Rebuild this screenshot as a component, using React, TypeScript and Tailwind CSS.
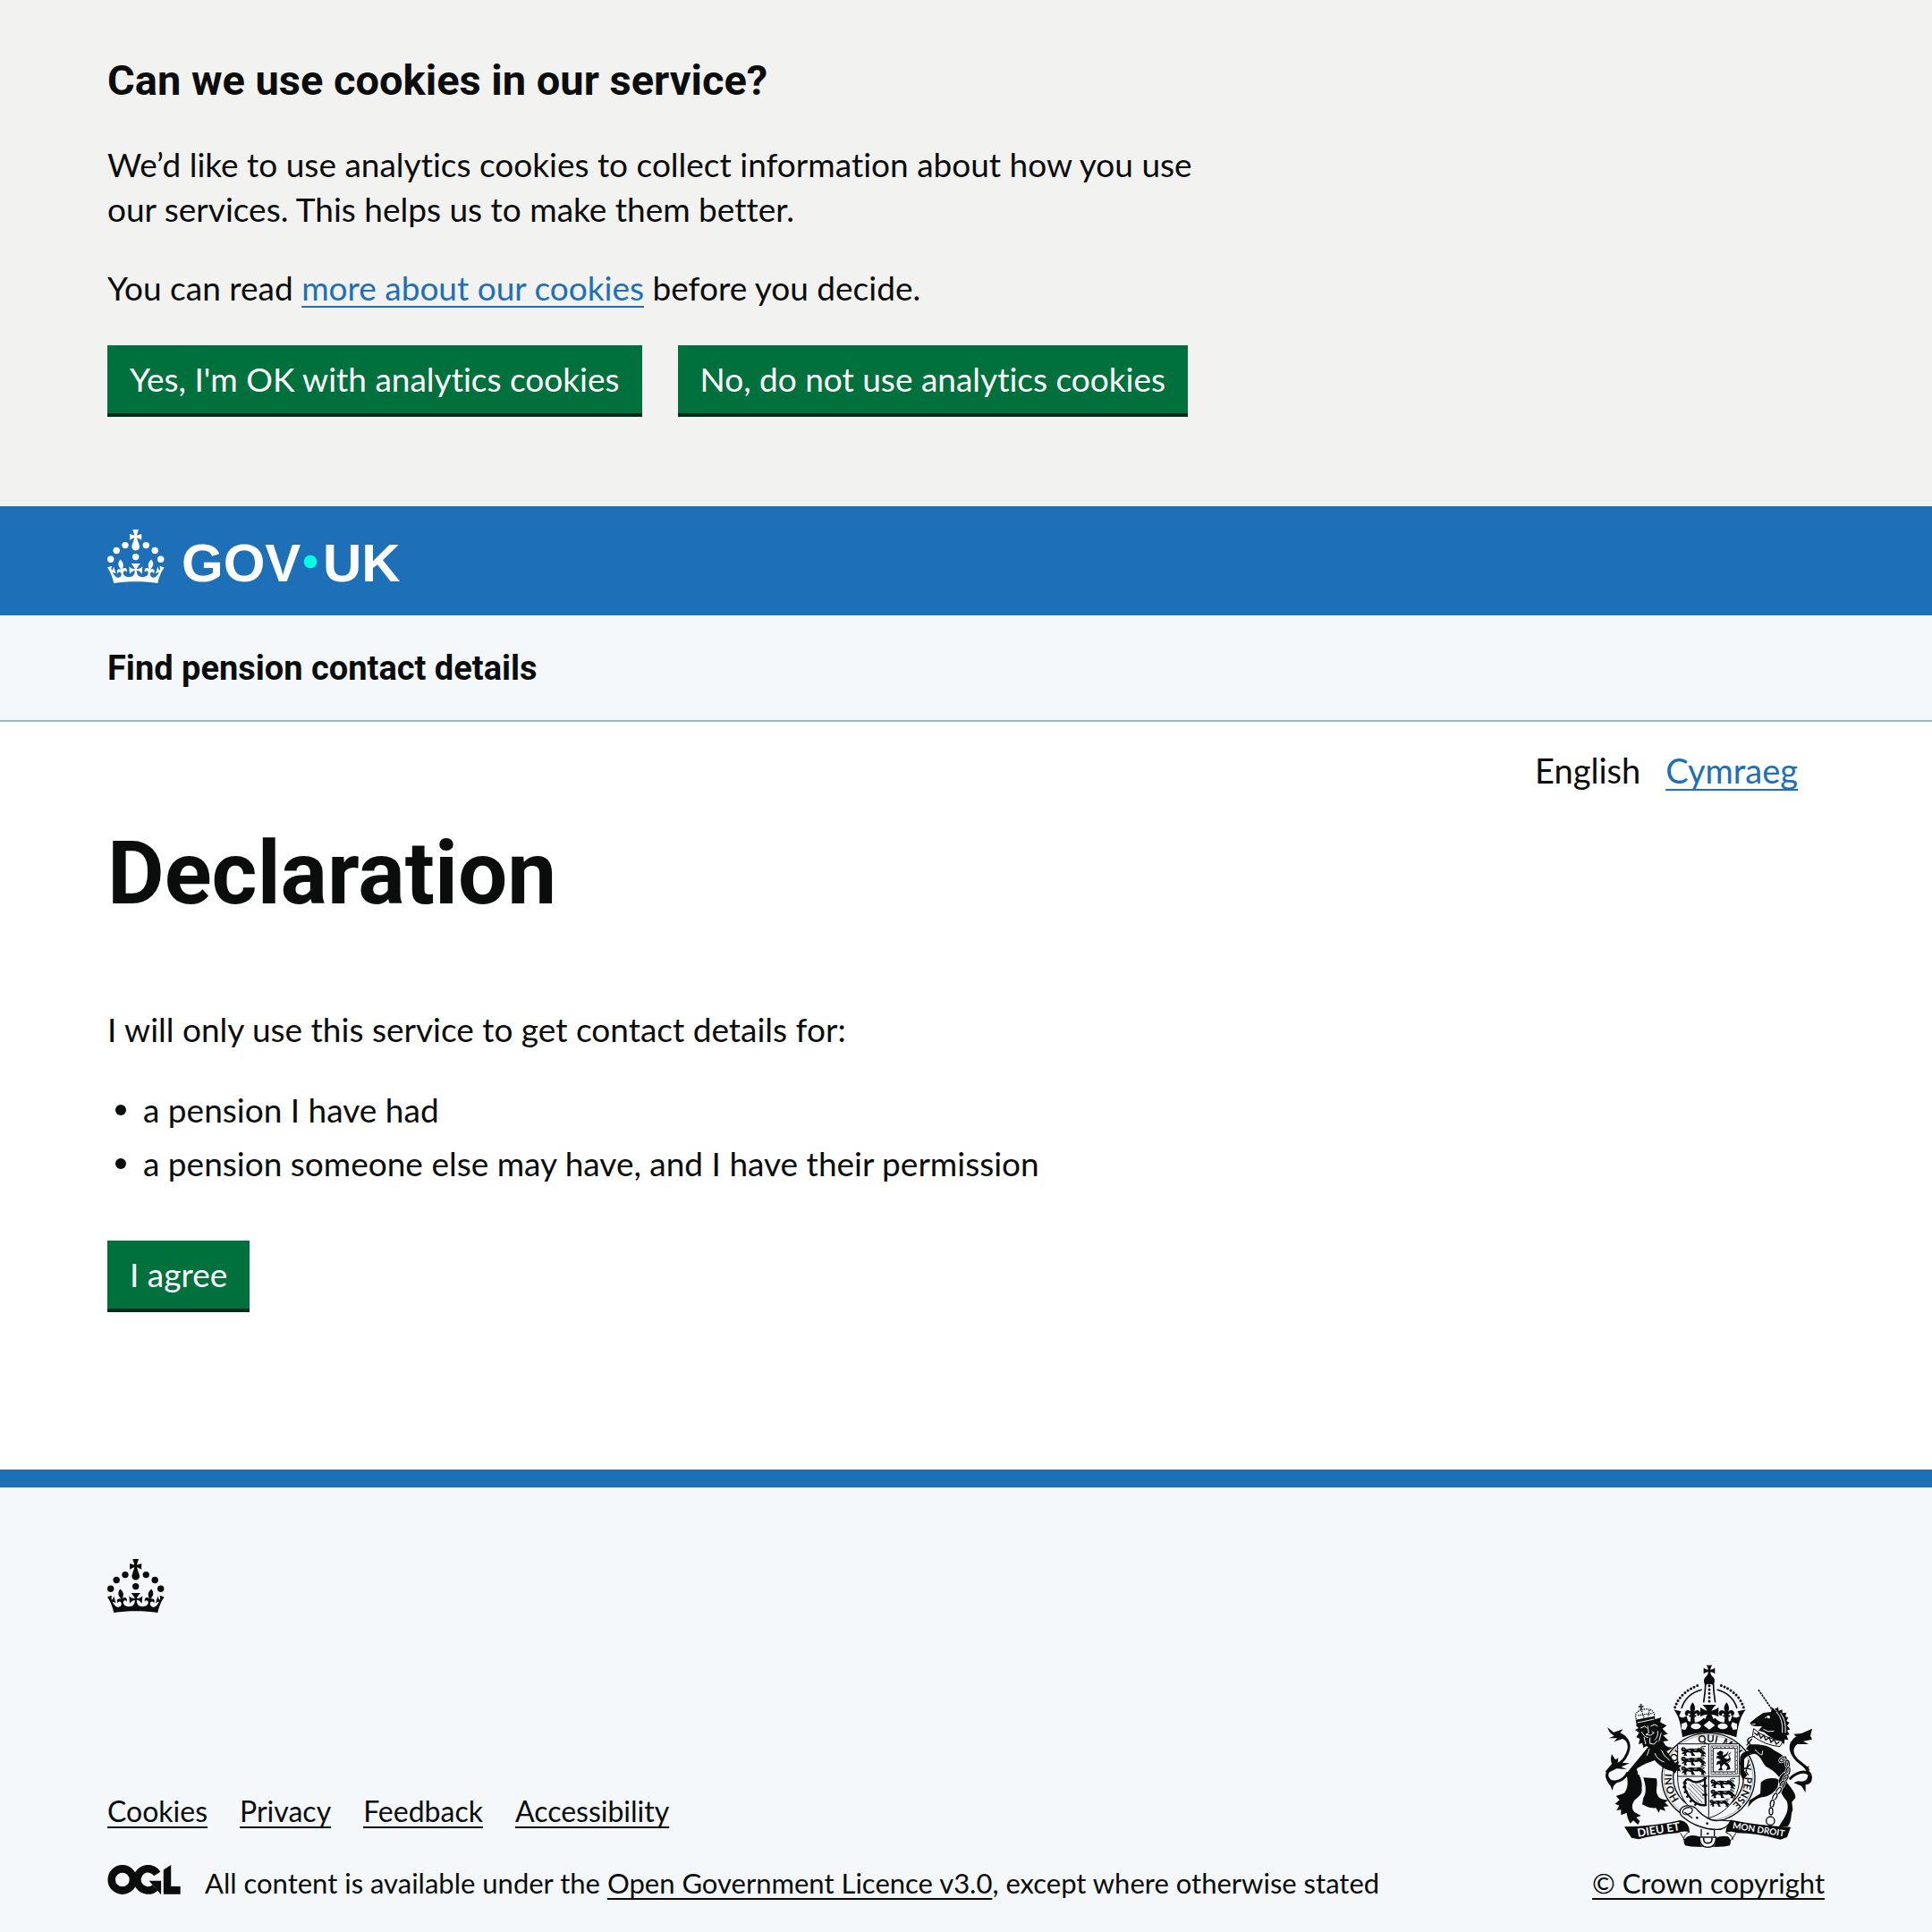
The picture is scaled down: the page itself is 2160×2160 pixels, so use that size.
import React from "react";

const INK = "#0b0c0c";
const PAPER = "#f4f8fb";

const CROWN_DOTS: [number, number][] = [
  [20, 17.6],
  [10.2, 23.5],
  [3.7, 33.2],
  [31.7, 30.6],
  [43.3, 17.6],
  [53.2, 23.5],
  [59.7, 33.2],
];

const CROWN_PATH =
  "M33.1,9.8c.2-.1.3-.3.5-.5l4.6,2.4v-6.8l-4.6,1.5c-.1-.2-.3-.3-.5-.5l1.9-5.9h-6.7l1.9,5.9c-.2.1-.3.3-.5.5l-4.6-1.5v6.8l4.6-2.4c.1.2.3.3.5.5l-2.6,8c-.9,2.8,1.2,5.7,4.1,5.7h0c3,0,5.1-2.9,4.1-5.7l-2.6-8ZM37,37.9s-3.4,3.8-4.1,6.1c2.2,0,4.2-.5,6.4-2.8l-.7,8.5c-2-2.8-4.4-4.1-5.7-3.8.1,3.1.5,6.7,5.8,7.2,3.7.3,6.7-1.5,7-3.8.4-2.6-2-4.3-3.7-1.6-1.4-4.5,2.4-6.1,4.9-3.2-1.9-4.5-1.8-7.7,2.4-10.9,3,4,2.6,7.3-1.2,11.1,2.4-1.3,6.2,0,4,4.6-1.2-2.8-3.7-2.2-4.2.2-.3,1.7.7,3.7,3,4.2,1.9.3,4.7-.9,7-5.9-1.3,0-2.4.7-3.9,1.7l2.4-8c.6,2.3,1.4,3.7,2.2,4.5.6-1.6.5-2.8,0-5.3l5,1.8c-2.6,3.6-5.2,8.7-7.3,17.5-7.4-1.1-15.7-1.7-24.5-1.7h0c-8.8,0-17.1.6-24.5,1.7-2.1-8.9-4.7-13.9-7.3-17.5l5-1.8c-.5,2.5-.6,3.7,0,5.3.8-.8,1.6-2.3,2.2-4.5l2.4,8c-1.5-1-2.6-1.7-3.9-1.7,2.3,5,5.2,6.2,7,5.9,2.3-.4,3.3-2.4,3-4.2-.5-2.4-3-3.1-4.2-.2-2.2-4.6,1.6-6,4-4.6-3.7-3.7-4.2-7.1-1.2-11.1,4.2,3.2,4.3,6.4,2.4,10.9,2.5-2.8,6.3-1.3,4.9,3.2-1.8-2.7-4.1-1-3.7,1.6.3,2.3,3.3,4.1,7,3.8,5.4-.5,5.7-4.2,5.8-7.2-1.3-.2-3.7,1-5.7,3.8l-.7-8.5c2.2,2.3,4.2,2.7,6.4,2.8-.7-2.3-4.1-6.1-4.1-6.1h10.6Z";

function CrownMark() {
  return (
    <g fill="currentColor">
      {CROWN_DOTS.map(([cx, cy]) => (
        <circle key={`${cx}-${cy}`} cx={cx} cy={cy} r="3.7" />
      ))}
      <path d={CROWN_PATH} />
    </g>
  );
}

function GovUkLogo() {
  return (
    <svg viewBox="0 0 324 60" width="324" height="60" role="img" aria-label="GOV.UK" className="block overflow-visible text-white">
      <CrownMark />
      <g fill="currentColor" fontFamily="'Liberation Sans', Arial, sans-serif" fontWeight="700" fontSize="60">
        <text x="83" y="58">GOV</text>
        <text x="241" y="58">UK</text>
      </g>
      <circle cx="227" cy="36" r="7.3" fill="#00ffe0" />
    </svg>
  );
}

function OglLogo() {
  return (
    <svg viewBox="0 0 483 196" width="82" height="33" role="img" aria-label="Open Government Licence" className="block shrink-0">
      <g fill="none" stroke={INK} strokeWidth="51">
        <circle cx="98" cy="98" r="72" />
        <path d="M329 59A72 72 0 1 0 316 151" />
      </g>
      <g fill={INK}>
        <rect x="165" y="60" width="36" height="76" />
        <path d="M275 106h80v88h-3z" />
        <path d="M371 32L421 0v143h62v51H371z" />
      </g>
    </svg>
  );
}

function PassantLion({ x, y }: { x: number; y: number }) {
  return (
    <g transform={`translate(${x} ${y})`}>
      <path
        fill={INK}
        d="M0 6L5 0L13 1L18 7L28 5C38 2 46 7 56 4C64 1 70 5 73 11L81 17L84 25L76 22L79 30L66 28L70 23L61 16C53 19 45 17 40 17L44 24L48 29H36L33 19L22 17L17 21L20 29H9L12 22L2 24L6 17L12 15L3 14Z"
      />
      <path d="M72 8C84 9 76 1 68 3C62 -1 76 -5 83 -2" fill="none" stroke={INK} strokeWidth="3" />
      <path d="M6 7h6M24 10l8 3M44 10l10-1" stroke={PAPER} strokeWidth="2" />
    </g>
  );
}

function CrossPatee({ x, y, r }: { x: number; y: number; r: number }) {
  return (
    <path
      transform={`translate(${x} ${y}) scale(${r})`}
      fill={INK}
      d="M-.5-1H.5Q.2-.6.18-.18Q.6-.2 1-.5V.5Q.6.2.18.18Q.2.6.5 1H-.5Q-.2.6-.18.18Q-.6.2-1 .5V-.5Q-.6-.2-.18-.18Q-.2-.6-.5-1Z"
    />
  );
}

function FleurDeLis({ x, y }: { x: number; y: number }) {
  return (
    <path
      transform={`translate(${x} ${y})`}
      fill={INK}
      d="M0-28C10-15 10-5 4 6C8-4 24-6 26 8C26 16 18 20 14 14C18 8 12 5 6 14L12 15V20L6 21L8 42H-8L-6 21L-12 20V15L-6 14C-12 5-18 8-14 14C-18 20-26 16-26 8C-24-6-8-4-4 6C-10-5-10-15 0-28Z"
    />
  );
}

const CHAIN: [number, number, number][] = [
  [670, 351, 60],
  [685, 366, -10],
  [687, 390, 10],
  [679, 414, 30],
  [668, 435, 25],
  [656, 456, 35],
  [643, 476, 25],
  [634, 499, 10],
  [630, 525, 0],
];

const GARTER_WORDS: [string, number][] = [
  ["HONI", 112],
  ["SOIT", 222],
  ["QUI", 346],
  ["MAL", 424],
  ["Y", 528],
  ["PENSE", 566],
];

function RoyalArms() {
  return (
    <svg viewBox="60 30 720 624" width="240" height="208" aria-hidden="true" className="block">
      {/* Imperial crown */}
      <CrossPatee x={423} y={54} r={19} />
      <path fill={INK} d="M417 70h12c14 8 14 18 8 32q-14-8-28 0c-6-14-6-24 8-32z" />
      <g fill="none" stroke={INK}>
        <path d="M308 176Q326 122 394 100M538 176Q520 122 453 100" strokeWidth="9" strokeLinecap="round" strokeDasharray="0 12" />
        <path d="M330 180Q344 132 398 117M516 180Q502 132 449 117" strokeWidth="5" />
        <path d="M404 160Q410 120 410 99Q423 90 437 99Q437 120 443 160" strokeWidth="5" />
        <path d="M423 104V158" strokeWidth="9" strokeLinecap="round" strokeDasharray="0 13" />
      </g>
      <path
        fill={INK}
        d="M304 184L328 190L322 206C334 214 342 210 346 204L352 222C372 232 390 228 404 212L410 216H436L443 212C456 228 474 232 494 222L500 204C504 210 512 214 525 206L518 190L545 184C528 208 520 232 514 277C460 256 386 256 333 277C327 232 322 208 304 184Z"
      />
      <path fill={INK} d="M400 168L446 168Q434 178 430 188Q444 186 454 176V208Q440 200 430 200L440 222H407L416 200Q404 200 393 208V176Q404 186 416 188Q412 178 400 168Z" />
      <FleurDeLis x={367} y={188} />
      <FleurDeLis x={481} y={188} />
      <g fill={PAPER}>
        <ellipse cx="378" cy="240" rx="17" ry="10" />
        <ellipse cx="468" cy="240" rx="17" ry="10" />
        <path d="M423 221L442 237L423 251L404 237ZM330 232L346 226L350 238L343 252L330 250ZM516 232L500 226L496 238L503 252L516 250Z" />
      </g>

      {/* Garter */}
      <ellipse cx="420" cy="412" rx="156" ry="149" fill={PAPER} stroke={INK} strokeWidth="4" />
      <ellipse cx="420" cy="412" rx="150" ry="143" fill="none" stroke={INK} strokeWidth="1" />
      <ellipse cx="420" cy="412" rx="118" ry="112" fill="none" stroke={INK} strokeWidth="4" />
      <path id="garter" fill="none" d="M420 532A122 119 0 0 1 298 412A122 119 0 0 1 542 412A122 119 0 0 1 420 532" />
      {GARTER_WORDS.map(([word, offset]) => (
        <text key={word} fill={INK} fontFamily="Lato, sans-serif" fontWeight="700" fontSize="34">
          <textPath href="#garter" startOffset={offset}>
            {word}
          </textPath>
        </text>
      ))}

      {/* Quartered shield */}
      <path d="M317 299H524V412C524 478 484 530 421 548C358 530 317 478 317 412Z" fill={PAPER} stroke={INK} strokeWidth="3" />
      <path d="M421 299V546M317 408H524" stroke={INK} strokeWidth="3" />
      <PassantLion x={328} y={310} />
      <PassantLion x={328} y={342} />
      <PassantLion x={328} y={374} />
      <PassantLion x={427} y={418} />
      <PassantLion x={427} y={452} />
      <g transform="translate(424 486) scale(.8)">
        <PassantLion x={0} y={0} />
      </g>
      <g fill="none" stroke={INK}>
        <rect x="429" y="306" width="88" height="94" strokeWidth="2" />
        <rect x="436" y="314" width="74" height="79" strokeWidth="3" />
        <rect x="432" y="310" width="82" height="86" strokeWidth="3" strokeDasharray="3 11" />
      </g>
      <path
        fill={INK}
        d="M448 330L460 322L470 326L468 338L480 332L488 322L484 336L472 346L484 350L494 344L490 356L480 360L490 370L494 384L480 388L484 376L472 366L464 376L468 388H452L460 378L458 366L446 370L450 358L462 354L450 346L446 352L448 340L458 338L450 336Z"
      />
      <path d="M480 366Q500 356 490 342Q484 332 496 328" fill="none" stroke={INK} strokeWidth="3" />
      {/* Harp */}
      <path d="M342 424Q346 414 358 420Q380 436 408 418L411 504Q378 510 352 470Q336 448 342 424Z" fill="none" stroke={INK} strokeWidth="7" />
      <path d="M335 428l12 4M334 444l12 0M338 462l12-4M346 478l10-6M358 494l8-8M374 506l6-8M404 414l10 0M400 440h16M400 470h16" stroke={INK} strokeWidth="7" />
      <path d="M356 434L404 484M352 446L400 496M364 432L404 470M376 432L404 458M390 432L404 446M356 462L388 496" stroke={INK} strokeWidth="2" />

      {/* Lion supporter */}
      <path d="M148 398C134 426 88 440 80 406C78 376 118 380 140 346C166 306 152 278 120 274" fill="none" stroke={INK} strokeWidth="9" strokeLinecap="round" />
      <g fill={INK}>
        <path d="M82 244L102 260L134 250L124 262Q146 270 154 292L132 282L104 292L114 280L86 280L104 272Q86 262 82 244Z" />
        <path d="M96 334L108 352L118 346L116 362L156 364L128 376L146 384L112 382L84 396L74 392L96 366Q90 350 96 334Z" />
        <path d="M74 400Q84 428 112 430L102 440L98 456L92 440Q76 424 74 400Z" />
        <path d="M216 312L145 398C152 430 150 448 138 464L110 474L122 487L107 500L121 506L112 522L127 520L127 538L146 530C148 546 152 556 158 566L168 556L184 570L190 558L178 546L194 540L172 528C160 514 164 498 174 486C190 474 200 462 196 448C200 430 192 412 186 400C182 390 178 386 182 380C202 368 222 360 240 354C256 374 280 388 298 390L308 398L314 388L328 392L322 379L331 372L318 368L322 358L308 362C296 350 290 335 280 325L304 310C286 314 276 304 262 296Z" />
        <path d="M202 412L246 415C252 440 240 456 250 472C254 482 266 486 286 488L274 496L287 508L270 510L276 524L258 518L254 530L244 514C226 516 212 510 198 502L202 480C214 460 210 440 202 412Z" />
        <path d="M176 236L262 210L258 226L280 238L266 248L284 266L268 270L286 288L268 291L280 310L258 302L258 320L241 306L228 324L214 306L202 312L198 296L186 300L190 282L178 276L188 262L174 252L186 246Z" />
        <path d="M176 218L240 206L242 226L180 240Z" />
      </g>
      <CrossPatee x={194} y={174} r={8} />
      <g fill="none" stroke={INK} strokeWidth="4" strokeDasharray="4 3">
        <path d="M178 216C170 196 184 186 208 182C232 182 242 194 238 210" />
        <path d="M194 182L204 212M222 186L218 208M184 204L234 196" />
      </g>
      <g fill="none" stroke={PAPER} strokeWidth="3">
        <path d="M182 228L238 216M192 246L206 240L214 246M226 240L240 234L250 240M216 238L220 262L210 268L226 270L238 262L230 258M196 258Q204 276 218 278M250 256Q252 276 240 286M224 278V298L238 300L248 288M204 276L210 300M262 262L254 290" />
        <path d="M184 402Q190 390 180 384M222 316L214 338M240 330Q248 352 272 360M262 320Q270 340 290 354" />
      </g>

      {/* Unicorn supporter */}
      <path d="M588 118L638 190" stroke={INK} strokeWidth="5" strokeDasharray="7 3" />
      <g fill={INK}>
        <path d="M559 229L582 210L604 195L630 192L634 176L646 188C674 202 686 232 680 258L664 290C640 286 622 274 608 260L588 254L600 240L580 240L566 238Z" />
        <path d="M642 182L654 176L656 188L668 184L668 196L682 194L678 208L688 210L682 222L692 228L684 238L694 250L684 254L692 268L682 270L688 286L676 284L674 300L662 292L676 260L680 236L672 210Z" />
        <path d="M556 302C590 298 622 304 640 320C666 334 682 344 690 362C692 388 686 402 684 430C700 450 713 466 712 480L700 494L703 520C694 540 702 556 686 576L656 577L674 548C686 530 690 508 682 490C664 470 652 440 658 412C648 396 632 384 612 374C596 352 594 338 576 332C560 334 546 340 540 352L540 388L550 404L536 420L526 398V350C528 332 536 326 556 322L546 316Z" />
        <path d="M596 428C614 412 636 412 656 418L652 448C636 464 626 474 606 477C588 478 576 488 566 496L552 512L558 488L594 466Z" />
        <path d="M768 248L762 272L768 284L738 290L756 300L718 300Q696 318 716 348L700 326Q690 306 704 286L716 276L706 266L732 264Z" />
        <path d="M738 376L760 374L750 384Q774 396 766 424Q760 436 746 436L746 462L732 440L706 430L720 424Q752 430 754 404Q752 392 738 376Z" />
      </g>
      <path d="M716 278C686 300 694 328 716 352C730 366 750 376 756 388" fill="none" stroke={INK} strokeWidth="9" />
      <path d="M756 400C746 388 716 392 692 418" fill="none" stroke={INK} strokeWidth="9" />
      <g fill="none" stroke={PAPER} strokeWidth="3">
        <path d="M648 192Q672 216 668 262M662 196Q682 222 678 262M610 212L620 206M566 234L578 232M604 250Q620 262 640 256" />
        <path d="M576 318Q592 336 600 336L602 322" />
        <path d="M654 420Q664 396 680 392" />
      </g>
      <circle cx="622" cy="209" r="5" fill={PAPER} />
      <path d="M572 248L568 272Q610 304 660 308L670 290Q610 282 572 248Z" fill={PAPER} stroke={INK} strokeWidth="3" />
      <path d="M574 262L584 270L588 262L596 280L606 270L612 286L624 278L630 294L640 284L648 300L658 292" fill="none" stroke={INK} strokeWidth="4" />
      <path d="M576 274Q548 276 552 292Q566 300 556 312M566 282L548 304" fill="none" stroke={INK} strokeWidth="4" />
      <path d="M556 352L546 392L554 404" fill="none" stroke={INK} strokeWidth="4" />
      {CHAIN.map(([x, y, a]) => (
        <g key={`${x}-${y}`} transform={`rotate(${a} ${x} ${y})`} fill="none">
          <ellipse cx={x} cy={y} rx="6" ry="12" stroke={PAPER} strokeWidth="8" />
          <ellipse cx={x} cy={y} rx="6" ry="12" stroke={INK} strokeWidth="4" />
        </g>
      ))}
      <circle cx="628" cy="557" r="14" fill="none" stroke={INK} strokeWidth="4" />

      {/* Belt and buckle */}
      <path d="M326 520C336 500 372 504 384 522C400 540 430 560 452 556C470 552 480 560 496 556C488 574 470 588 444 586C410 586 366 570 340 548C326 540 322 532 326 520Z" fill={PAPER} stroke={INK} strokeWidth="4" />
      <ellipse cx="350" cy="524" rx="17" ry="11" fill="none" stroke={INK} strokeWidth="4" transform="rotate(-20 350 524)" />
      <path d="M340 528L366 548" stroke={INK} strokeWidth="4" />
      <g fill={INK}>
        <circle cx="382" cy="547" r="4" />
        <circle cx="416" cy="566" r="4" />
        <circle cx="418" cy="600" r="4" />
      </g>

      {/* Motto scroll */}
      <g fill={INK}>
        <path d="M138 577Q240 576 326 555Q356 560 357 594Q330 590 318 598Q250 602 186 619L162 614Z" />
        <path d="M500 555Q580 572 696 578L684 612L662 620Q580 598 516 598Q500 590 478 596Q480 566 500 555Z" />
        <path d="M342 640Q330 622 350 610Q376 600 398 616Q390 634 398 644Q370 646 342 640ZM492 640Q500 622 486 610Q462 604 440 616Q448 632 438 644Q466 646 492 640Z" />
      </g>
      <path d="M326 598Q344 644 420 644Q496 644 512 598M357 594Q340 600 336 622M478 596Q500 604 502 620" fill="none" stroke={INK} strokeWidth="3" />
      <path d="M396 584V610M440 584V610" stroke={INK} strokeWidth="4" />
      <path d="M390 612Q392 646 418 646Q444 646 446 612Z" fill={PAPER} stroke={INK} strokeWidth="4" />
      <path d="M404 614Q402 632 418 632Q434 632 432 614" fill="none" stroke={INK} strokeWidth="5" />
      <g fill={PAPER} fontFamily="Lato, sans-serif" fontWeight="700">
        <text transform="translate(184 611) rotate(-9)" fontSize="38">
          DIEU ET
        </text>
        <text transform="translate(500 583) rotate(9)" fontSize="30">
          MON DROIT
        </text>
      </g>
    </svg>
  );
}

function Button({ children }: { children: React.ReactNode }) {
  return (
    <button
      type="button"
      className="cursor-pointer bg-[#00703c] px-[25px] py-[19px] text-[37px] leading-[38px] text-white shadow-[0_4px_0_#002d18]"
    >
      {children}
    </button>
  );
}

const FOOTER_LINKS = ["Cookies", "Privacy", "Feedback", "Accessibility"];

const LINK = "text-[#1d70b8] underline decoration-2 underline-offset-[6px] [text-decoration-skip-ink:none]";
const FOOTER_LINK = "underline decoration-2 underline-offset-[5px] [text-decoration-skip-ink:none]";

export default function App() {
  return (
    <div className="min-h-screen bg-[#f4f8fb] font-['Lato','Noto_Sans',sans-serif] text-[37px] leading-[50px] text-[#0b0c0c] [font-variant-ligatures:none]">
      <section aria-label="Cookies" className="bg-[#f2f2f0] px-[120px] pt-[60px] pb-[104px]">
        <div className="w-2/3">
          <h2 className="mb-[39px] font-['Roboto',sans-serif] text-[47px] leading-[60px] font-bold">
            Can we use cookies in our service?
          </h2>
          <p className="mb-[38px] pr-10">
            We’d like to use analytics cookies to collect information about how you use our services. This helps us to
            make them better.
          </p>
          <p className="mb-[39px]">
            You can read{" "}
            <a href="#cookies" className={LINK}>
              more about our cookies
            </a>{" "}
            before you decide.
          </p>
        </div>
        <div className="flex flex-wrap gap-10">
          <Button>Yes, I'm OK with analytics cookies</Button>
          <Button>No, do not use analytics cookies</Button>
        </div>
      </section>

      <header>
        <div className="bg-[#1d70b8] px-[120px] pt-[26px] pb-9">
          <a href="#home" className="inline-block align-top">
            <GovUkLogo />
          </a>
        </div>
        <div className="border-b-2 border-[#8eb8dc] px-[120px] pt-[34px] pb-[33px]">
          <a href="#service" className="block font-['Roboto',sans-serif] text-[38px] font-bold">
            Find pension contact details
          </a>
        </div>
      </header>

      <main className="bg-white px-[120px] pt-[29px] pb-[180px]">
        <nav aria-label="Language" className="mr-[30px] mb-[41px] flex justify-end gap-7 text-[38px]">
          <span aria-current="true">English</span>
          <a href="#cy" lang="cy" className={LINK}>
            Cymraeg
          </a>
        </nav>
        <h1 className="mb-[99px] font-['Roboto',sans-serif] text-[98px] leading-[100px] font-bold">Declaration</h1>
        <p className="mb-10">I will only use this service to get contact details for:</p>
        <ul className="mb-[61px] flex flex-col gap-[10px]">
          {["a pension I have had", "a pension someone else may have, and I have their permission"].map((item) => (
            <li key={item} className="flex items-center gap-[19px] pl-[9px]">
              <span className="size-3 shrink-0 rounded-full bg-[#0b0c0c]" />
              {item}
            </li>
          ))}
        </ul>
        <Button>I agree</Button>
      </main>

      <footer className="border-t-[20px] border-[#1d70b8] px-[120px] pt-20 pb-[35px] text-[31px] leading-10">
        <svg viewBox="0 0 64 60" width="64" height="60" aria-hidden="true" className="mb-[57px] block">
          <CrownMark />
        </svg>
        <div className="flex items-end justify-between gap-10">
          <div>
            <ul className="mb-10 flex flex-wrap gap-x-9 text-[32px]">
              {FOOTER_LINKS.map((label) => (
                <li key={label}>
                  <a href={`#${label.toLowerCase()}`} className={FOOTER_LINK}>
                    {label}
                  </a>
                </li>
              ))}
            </ul>
            <div className="flex gap-[27px]">
              <OglLogo />
              <span>
                All content is available under the{" "}
                <a href="#licence" className={FOOTER_LINK}>
                  Open Government Licence v3.0
                </a>
                , except where otherwise stated
              </span>
            </div>
          </div>
          <a href="#copyright" className="flex flex-col items-center gap-[17px]">
            <RoyalArms />
            <span className={FOOTER_LINK}>© Crown copyright</span>
          </a>
        </div>
      </footer>
    </div>
  );
}
